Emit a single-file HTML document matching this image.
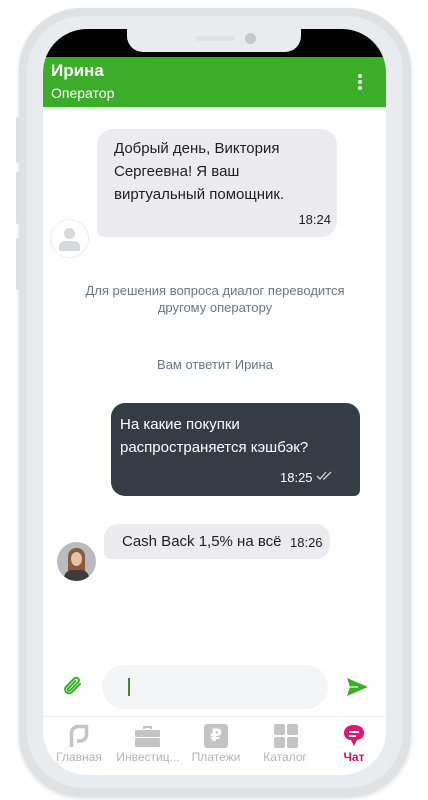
<!DOCTYPE html><html><head><meta charset="utf-8"><style>
*{margin:0;padding:0;box-sizing:border-box}
body{width:428px;height:800px;background:#fff;position:relative;overflow:hidden;font-family:"Liberation Sans","DejaVu Sans",sans-serif}
.a{position:absolute}
.t{font-size:15px;color:#1f1f1f;line-height:23px}
.g{font-size:13px;color:#667888;text-align:center;line-height:17px}
.nl{font-size:12px;color:#b5b5b8;text-align:center;width:76px}
</style></head><body>
<div class="a" style="left:19px;top:8px;width:392px;height:788px;border-radius:62px;background:#dfe2e5;box-shadow:0 2px 4px rgba(0,0,0,.15)"></div>
<div class="a" style="left:27px;top:16px;width:376px;height:772px;border-radius:56px;background:#e9ecee"></div>
<div class="a" style="left:16px;top:117px;width:4px;height:46px;background:#dde0e3;border-radius:2px"></div>
<div class="a" style="left:16px;top:172px;width:4px;height:52px;background:#dde0e3;border-radius:2px"></div>
<div class="a" style="left:16px;top:238px;width:4px;height:52px;background:#dde0e3;border-radius:2px"></div>
<div class="a" style="left:43px;top:29px;width:343px;height:746px;border-radius:44px;background:#fff;overflow:hidden">
 <div class="a" style="left:0;top:0;width:343px;height:29px;background:#000"></div>
 <div class="a" style="left:84px;top:-2px;width:174px;height:25px;background:#e9ecee;border-radius:0 0 16px 16px"></div>
 <div class="a" style="left:152px;top:7px;width:40px;height:5px;background:#dfe2e5;border-radius:3px"></div>
 <div class="a" style="left:202px;top:4px;width:11px;height:11px;background:#c6c8cb;border-radius:50%"></div>
 <div class="a" style="left:0;top:28px;width:343px;height:50px;background:#3bad29;box-shadow:0 2px 3px rgba(0,0,0,.15)"></div>
 <div class="a" style="left:8px;top:32px;color:#fff;font-weight:bold;font-size:17px">Ирина</div>
 <div class="a" style="left:8px;top:56px;color:#fff;font-size:14px">Оператор</div>
 <div class="a" style="left:315px;top:45px;width:4px;height:4px;background:#fff;border-radius:50%;box-shadow:0 6px 0 #fff,0 12px 0 #fff"></div>
</div>
<div class="a" style="left:97px;top:129px;width:240px;height:108px;background:#ececf0;border-radius:16px 16px 16px 6px"></div>
<div class="a t" style="left:114px;top:137px">Добрый день, Виктория<br>Сергеевна! Я ваш<br>виртуальный помощник.</div>
<div class="a" style="right:97px;top:212px;font-size:13px;color:#1f1f1f">18:24</div>
<div class="a" style="left:50px;top:219px;width:39px;height:39px;border-radius:50%;border:1.5px solid #eceef0;background:#fff;overflow:hidden">
 <div class="a" style="left:13px;top:8px;width:11px;height:11px;border-radius:50%;background:#d7d9dc"></div>
 <div class="a" style="left:8px;top:21px;width:21px;height:10px;border-radius:6px 6px 1px 1px;background:#d7d9dc"></div>
</div>
<div class="a g" style="left:60px;top:282px;width:310px">Для решения вопроса диалог переводится<br>другому оператору</div>
<div class="a g" style="left:60px;top:356px;width:310px">Вам ответит Ирина</div>
<div class="a" style="left:111px;top:403px;width:249px;height:93px;background:#343d46;border-radius:14px 14px 6px 14px"></div>
<div class="a t" style="left:120px;top:413px;color:#fff">На какие покупки<br>распространяется кэшбэк?</div>
<div class="a" style="left:280px;top:470px;font-size:13px;color:#fff">18:25</div>
<svg class="a" style="left:316px;top:470px" width="18" height="12" viewBox="0 0 18 12"><path d="M1 6l3 3 6-7M7 9l1 0 7-7" stroke="#cfd3d6" stroke-width="1.3" fill="none"/></svg>
<div class="a" style="left:104px;top:524px;width:226px;height:35px;background:#ececf0;border-radius:14px 14px 14px 6px"></div>
<div class="a" style="left:122px;top:533px;font-size:15px;color:#1f1f1f">Cash Back 1,5% на всё</div>
<div class="a" style="left:290px;top:535px;font-size:13px;color:#1f1f1f">18:26</div>
<div class="a" style="left:57px;top:542px;width:39px;height:39px;border-radius:50%;background:#b9bcbf;overflow:hidden">
 <div class="a" style="left:11px;top:6px;width:17px;height:30px;border-radius:8px;background:#8a5a3e"></div>
 <div class="a" style="left:14px;top:10px;width:11px;height:14px;border-radius:50%;background:#e5c2a8"></div>
 <div class="a" style="left:7px;top:28px;width:25px;height:14px;border-radius:8px 8px 0 0;background:#3c3c3c"></div>
</div>
<svg class="a" style="left:61px;top:675px" width="24" height="24" viewBox="0 0 24 24"><path d="M19 9l-8.5 8.5a4 4 0 0 1-5.6-5.6L13.5 3.3a2.7 2.7 0 0 1 3.8 3.8L9 15.4a1.3 1.3 0 0 1-1.9-1.9L14.5 6" stroke="#3bad29" stroke-width="2" fill="none" stroke-linecap="round"/></svg>
<div class="a" style="left:102px;top:665px;width:226px;height:44px;background:#f4f5f6;border-radius:22px"></div>
<div class="a" style="left:128px;top:678px;width:2px;height:18px;background:#3b8c2a"></div>
<svg class="a" style="left:346px;top:677px" width="23" height="20" viewBox="0 0 23 20"><path d="M1 1L22 10 1 19 4 10z" fill="#3bad29"/><path d="M4 10h8" stroke="#fff" stroke-width="1.2"/></svg>
<div class="a" style="left:43px;top:716px;width:343px;height:1px;background:#f1f2f3"></div>
<svg class="a" style="left:68px;top:724px" width="22" height="24" viewBox="0 0 22 24"><path d="M3.5 23V9a6.5 6.5 0 0 1 6.5-6.5h8.5v8a6.5 6.5 0 0 1-6.5 6.5H9" stroke="#c4c4c7" stroke-width="3.5" fill="none"/></svg>
<svg class="a" style="left:135px;top:725px" width="25" height="22" viewBox="0 0 25 22"><path d="M9 4V2h7v2" stroke="#c4c4c7" stroke-width="2" fill="none"/><rect x="0" y="5" width="25" height="7" rx="1" fill="#c4c4c7"/><rect x="0" y="13" width="25" height="9" rx="1" fill="#c4c4c7"/></svg>
<div class="a" style="left:204px;top:724px;width:24px;height:24px;background:#c4c4c7;border-radius:3px;color:#fff;font-weight:bold;font-size:17px;text-align:center;line-height:24px">₽</div>
<div class="a" style="left:274px;top:724px;width:11px;height:11px;background:#c4c4c7;border-radius:2px;box-shadow:13px 0 0 #c4c4c7,0 13px 0 #c4c4c7,13px 13px 0 #c4c4c7"></div>
<svg class="a" style="left:343px;top:724px" width="22" height="24" viewBox="0 0 22 24"><path d="M11 1C5 1 1 4 1 9c0 4 3 7 7 7l3 6 3-6c5-1 7-3 7-7 0-5-4-8-10-8z" fill="#e0166f"/><path d="M6 8h10M6 12h7" stroke="#fff" stroke-width="2"/></svg>
<div class="a nl" style="left:41px;top:750px">Главная</div>
<div class="a nl" style="left:110px;top:750px">Инвестиц...</div>
<div class="a nl" style="left:178px;top:750px">Платежи</div>
<div class="a nl" style="left:247px;top:750px">Каталог</div>
<div class="a nl" style="left:316px;top:750px;color:#c8145f;font-weight:bold">Чат</div>
</body></html>
